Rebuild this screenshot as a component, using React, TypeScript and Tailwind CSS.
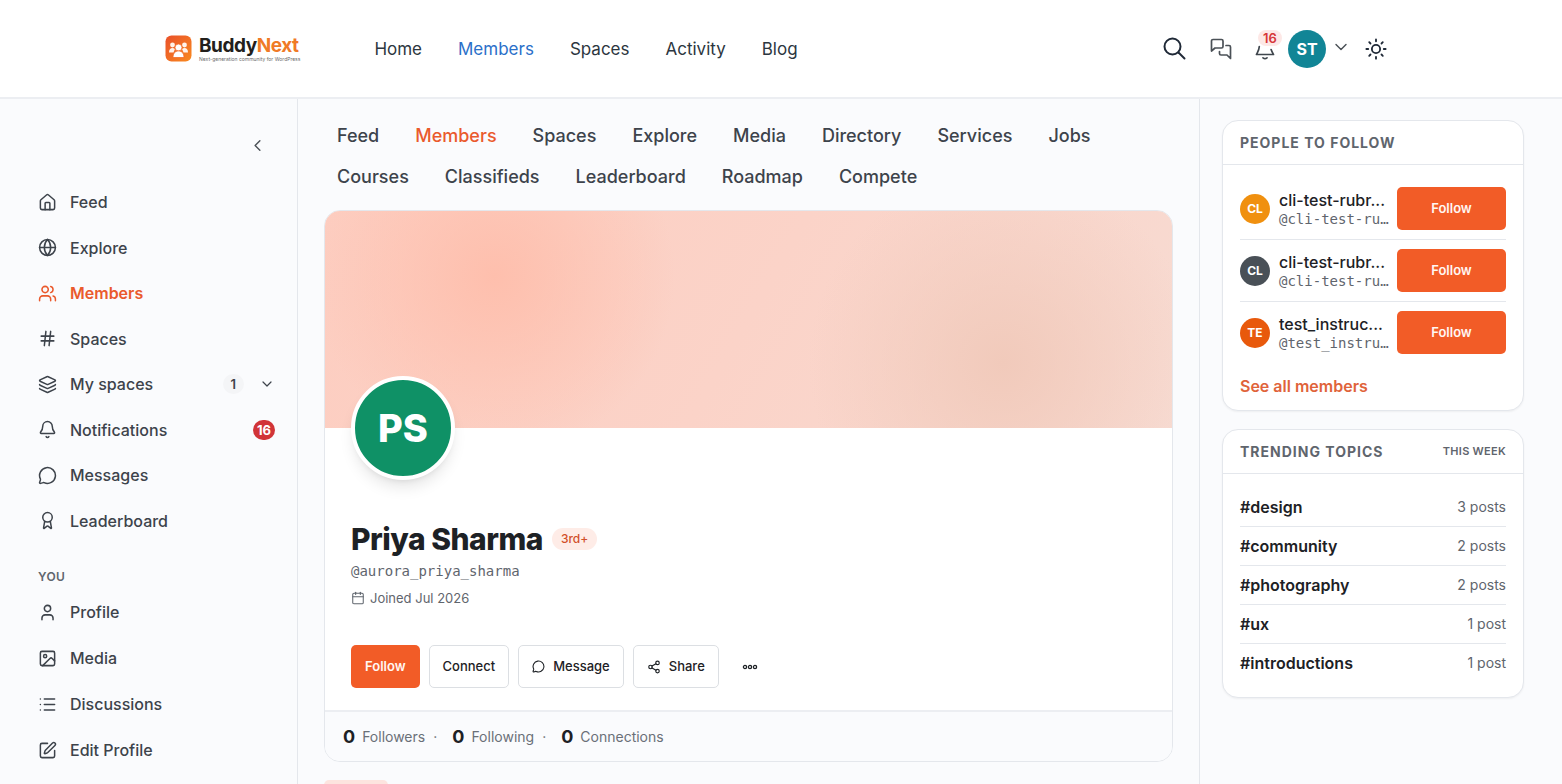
import React, { useState } from 'react';
import {
    Award,
    Bell,
    Calendar,
    ChevronDown,
    ChevronLeft,
    Globe,
    Hash,
    House,
    Image,
    Layers,
    List,
    LucideIcon,
    MessageCircle,
    Share2,
    SquarePen,
    User,
    Users,
} from 'lucide-react';

interface NavItem {
    label: string;
    icon: LucideIcon;
    count?: number;
    unread?: number;
}

const siteLinks = ['Home', 'Members', 'Spaces', 'Activity', 'Blog'];

const tabs = [
    'Feed', 'Members', 'Spaces', 'Explore', 'Media', 'Directory', 'Services', 'Jobs',
    'Courses', 'Classifieds', 'Leaderboard', 'Roadmap', 'Compete',
];

const mainNav: NavItem[] = [
    { label: 'Feed', icon: House },
    { label: 'Explore', icon: Globe },
    { label: 'Members', icon: Users },
    { label: 'Spaces', icon: Hash },
    { label: 'My spaces', icon: Layers, count: 1 },
    { label: 'Notifications', icon: Bell, unread: 16 },
    { label: 'Messages', icon: MessageCircle },
    { label: 'Leaderboard', icon: Award },
];

const youNav: NavItem[] = [
    { label: 'Profile', icon: User },
    { label: 'Media', icon: Image },
    { label: 'Discussions', icon: List },
    { label: 'Edit Profile', icon: SquarePen },
];

const people = [
    { id: 1, initials: 'CL', name: 'cli-test-rubr...', handle: '@cli-test-ru…', color: 'bg-[#f0900f]' },
    { id: 2, initials: 'CL', name: 'cli-test-rubr...', handle: '@cli-test-ru…', color: 'bg-[#495057]' },
    { id: 3, initials: 'TE', name: 'test_instruc...', handle: '@test_instru…', color: 'bg-[#e8590c]' },
];

const topics = [
    { tag: '#design', posts: '3 posts' },
    { tag: '#community', posts: '2 posts' },
    { tag: '#photography', posts: '2 posts' },
    { tag: '#ux', posts: '1 post' },
    { tag: '#introductions', posts: '1 post' },
];

const stats = [
    { label: 'Followers', value: 0 },
    { label: 'Following', value: 0 },
    { label: 'Connections', value: 0 },
];

const Logo = () => (
    <a href="#" className="flex items-center gap-[7px]">
        <svg width="27" height="27" viewBox="0 0 27 27" aria-hidden="true">
            <defs>
                <linearGradient id="logoFill" x1="0" y1="0" x2="1" y2="1">
                    <stop offset="0" stopColor="#e9502a" />
                    <stop offset="1" stopColor="#f98a1f" />
                </linearGradient>
            </defs>
            <rect x="0.5" y="0.5" width="26" height="26" rx="6" fill="url(#logoFill)" />
            <g fill="#fff3ea">
                <circle cx="7.500" cy="10" r="2.400" />
                <circle cx="19.500" cy="10" r="2.400" />
                <path d="M4 17.500c0-2.800 1.300-4.500 3.500-4.500 1 0 1.800.4 2.400 1l-1.400 3.500z" />
                <path d="M23 17.500c0-2.800-1.300-4.500-3.500-4.500-1 0-1.800.4-2.400 1l1.400 3.500z" />
            </g>
            <g fill="#fff" stroke="#f26c27" strokeWidth="0.8">
                <circle cx="13.500" cy="12.500" r="3.500" />
                <path d="M8 22.500c0-4 2-6.500 5.500-6.500s5.500 2.500 5.500 6.500z" />
            </g>
        </svg>
        <span className="flex flex-col">
            <span className="text-[19px] leading-5 font-bold tracking-tight text-[#231f1c]">
                Buddy<span className="text-[#f07a26]">Next</span>
            </span>
            <span className="text-[5px] leading-[6px] whitespace-nowrap text-[#6b6b6b]">Next-generation community for WordPress</span>
        </span>
    </a>
);

const SiteHeader = () => (
    <header className="border-b-2 border-[#eceef2] bg-white">
        <div className="mx-auto flex h-[97px] max-w-[1232px] items-center">
            <Logo />
            <nav className="ml-[74px] flex gap-9 pt-0.5 text-[17px]">
                {siteLinks.map(link => (
                    <a key={link} href="#" className={link === 'Members' ? 'text-[#2b70c9]' : 'text-[#2c3640]'}>{link}</a>
                ))}
            </nav>
            <div className="ml-auto flex items-center text-[#1f2937]">
                <button aria-label="Search" className="p-2">
                    <svg width="24" height="24" viewBox="0 0 24 24" fill="none" stroke="currentColor" strokeWidth="2" strokeLinecap="round">
                        <circle cx="10.500" cy="9.500" r="8" />
                        <path d="M16.500 15.500l6 6" />
                    </svg>
                </button>
                <button aria-label="Messages" className="ml-2 p-2">
                    <svg width="22" height="22" viewBox="0 0 22 22" fill="none" stroke="#4b5157" strokeWidth="1.700" strokeLinejoin="round" strokeLinecap="round">
                        <path d="M3 1.500h8.500a1.500 1.500 0 0 1 1.500 1.500v5.500a1.500 1.500 0 0 1-1.500 1.500H5L1.500 13V3A1.500 1.500 0 0 1 3 1.500z" />
                        <path d="M16 7.500h3a1.500 1.500 0 0 1 1.500 1.500v11.500L17 17h-6a1.500 1.500 0 0 1-1.500-1.500V13.500" />
                    </svg>
                </button>
                <button aria-label="Notifications, 16 unread" className="relative ml-[7px] p-2">
                    <svg width="20" height="22" viewBox="0 0 20 22" fill="none" stroke="#3f464d" strokeWidth="1.700" strokeLinecap="round" strokeLinejoin="round">
                        <path d="M4.300 8.500c-.2 3.500-1.300 5-2.800 8h17c-1.100-2-1.900-3.400-2.400-5" />
                        <path d="M8 19.800c1.200 1 2.800 1 4 0" />
                    </svg>
                    <span className="absolute top-0 left-[11px] rounded-full bg-[#fde8e6] px-[5px] text-[13px] leading-4 font-semibold text-[#d63638]">16</span>
                </button>
                <button className="ml-[5px] flex items-center gap-[5px]" aria-label="Account">
                    <span className="flex size-[38px] items-center justify-center rounded-full bg-[#118596] text-base font-bold text-white">ST</span>
                    <ChevronDown size={20} strokeWidth={1.7} className="-mt-1 text-[#4b5157]" />
                </button>
                <button aria-label="Toggle theme" className="ml-1 p-2.5">
                    <svg width="22" height="22" viewBox="0 0 24 24" fill="none" stroke="currentColor" strokeWidth="2" strokeLinecap="round">
                        <circle cx="12" cy="12" r="4.500" />
                        <path d="M12 1.500v2M12 20.500v2M1.500 12h2M20.500 12h2M4.600 4.600l1.400 1.400M18 18l1.400 1.400M4.600 19.400l1.400-1.400M18 6l1.400-1.400" />
                    </svg>
                </button>
            </div>
        </div>
    </header>
);

const SideLink = ({ item, active }: { item: NavItem; active?: boolean }) => {
    const Icon = item.icon;
    return (
        <a
            href="#"
            className={`flex h-11 items-center gap-[13px] text-base ${active ? 'font-semibold text-[#ea5a2d]' : 'font-medium text-[#3d434b]'}`}
        >
            <Icon size={19} strokeWidth={1.9} />
            {item.label}
            {item.count && (
                <>
                    <span className="ml-auto rounded-full bg-[#f4f5f7] px-2 text-[13px] leading-5 font-semibold">{item.count}</span>
                    <ChevronDown size={16} strokeWidth={1.8} className="ml-0.5" />
                </>
            )}
            {item.unread && (
                <span className="ml-auto rounded-full bg-[#d13438] px-1 text-[13px] leading-5 font-bold text-white">{item.unread}</span>
            )}
        </a>
    );
};

const Sidebar = () => (
    <aside className="w-[298px] shrink-0 border-r border-[#e4e7ec] pr-[22px] pl-[38px]">
        <div className="flex justify-end pt-9 pr-[7px]">
            <button aria-label="Collapse sidebar" className="p-px text-[#4b5157]"><ChevronLeft size={19} strokeWidth={1.8} /></button>
        </div>
        <nav className="mt-6 flex min-h-[363px] flex-col justify-between">
            {mainNav.map(item => <SideLink key={item.label} item={item} active={item.label === 'Members'} />)}
        </nav>
        <h2 className="mt-6 text-xs leading-5 font-semibold tracking-wide text-[#5f656d]">YOU</h2>
        <nav className="mt-[3px] flex flex-col gap-0.5">
            {youNav.map(item => <SideLink key={item.label} item={item} />)}
        </nav>
    </aside>
);

const ProfileCard = () => {
    const [following, setFollowing] = useState(false);
    const outline = 'flex h-[43px] items-center gap-2 rounded-[5px] border border-[#dcdfe3] bg-white px-[13px] text-[13px] font-medium text-[#1d2125]';

    return (
        <section className="mt-[13px] overflow-hidden rounded-2xl border border-[#e4e7ec] bg-white">
            <div className="h-[217px] bg-[radial-gradient(circle_at_20%_30%,#febfad_0%,transparent_26%),radial-gradient(circle_at_80%_70%,#f1cabb_0%,transparent_28%),linear-gradient(120deg,#fdcdc0_0%,#fbd3c8_50%,#f7dbd2_100%)]" />
            <div className="px-[26px] pb-[22px]">
                <div className="relative -mt-[52px] flex size-[104px] items-center justify-center rounded-full border-4 border-white bg-[#0f9166] text-[38px] font-extrabold text-white shadow-lg">
                    PS
                </div>
                <div className="mt-[38px] flex items-center gap-[9px]">
                    <h1 className="text-[30px] leading-[42px] font-extrabold tracking-[-0.5px] text-[#1d2125]">Priya Sharma</h1>
                    <span className="rounded-full bg-[#feece7] px-[9px] text-xs leading-[22px] font-medium text-[#d2502a]">3rd+</span>
                </div>
                <p className="font-['DejaVu_Sans_Mono',monospace] text-sm leading-[22px] text-[#5f656d]">@aurora_priya_sharma</p>
                <p className="mt-1 flex items-center gap-[5px] text-[13px] leading-6 text-[#5f656d]">
                    <Calendar size={14} strokeWidth={1.8} />
                    Joined Jul 2026
                </p>
                <div className="mt-[35px] flex items-center gap-[9px]">
                    <button
                        onClick={() => setFollowing(!following)}
                        className="h-[43px] rounded-[5px] bg-[#f25c27] px-[14px] text-[13px] font-semibold text-[#fff7f3]"
                    >
                        {following ? 'Following' : 'Follow'}
                    </button>
                    <button className={outline}>Connect</button>
                    <button className={outline}><MessageCircle size={13} strokeWidth={2} />Message</button>
                    <button className={outline}><Share2 size={14} strokeWidth={2} />Share</button>
                    <button aria-label="More" className="h-[43px] px-[14px] text-[#1d2125]">
                        <svg width="16" height="6" viewBox="0 0 16 6" fill="none" stroke="currentColor" strokeWidth="1.300">
                            <circle cx="3" cy="3" r="1.600" />
                            <circle cx="8" cy="3" r="1.600" />
                            <circle cx="13" cy="3" r="1.600" />
                        </svg>
                    </button>
                </div>
            </div>
            <div className="flex items-center border-t-2 border-[#eceef2] bg-[#fafbfd] px-[18px] text-sm leading-[49px] text-[#6a7078]">
                {stats.map((stat, i) => (
                    <React.Fragment key={stat.label}>
                        {i > 0 && <span className="mr-[15px] ml-2">·</span>}
                        <span className="mr-[7px] text-lg leading-[49px] font-bold text-[#1d2125]">{stat.value}</span>
                        <span>{stat.label}</span>
                    </React.Fragment>
                ))}
            </div>
        </section>
    );
};

const Widget = ({ title, note, children }: { title: string; note?: string; children: React.ReactNode }) => (
    <section className="rounded-2xl border border-[#e4e7ec] bg-white shadow-xs">
        <header className="flex h-11 items-center justify-between border-b border-[#e4e7ec] px-[17px]">
            <h2 className="text-sm font-bold tracking-[1px] text-[#5f656d]">{title}</h2>
            {note && <span className="text-[11px] font-semibold tracking-wide text-[#5f656d]">{note}</span>}
        </header>
        {children}
    </section>
);

const RightRail = () => (
    <aside className="flex w-[363px] shrink-0 flex-col gap-[18px] border-l border-[#e4e7ec] pt-[21px] pr-[38px] pl-[22px]">
        <Widget title="PEOPLE TO FOLLOW">
            <div className="px-[17px] pt-[13px] pb-3">
                <ul className="divide-y divide-[#e4e7ec]">
                    {people.map(person => (
                        <li key={person.id} className="flex items-center gap-[9px] py-[9px]">
                            <span className={`flex size-[30px] shrink-0 items-center justify-center rounded-full text-xs font-bold text-white ${person.color}`}>
                                {person.initials}
                            </span>
                            <span className="min-w-0 flex-1 whitespace-nowrap">
                                <span className="block text-base leading-5 font-medium text-[#1d2125]">{person.name}</span>
                                <span className="block font-['DejaVu_Sans_Mono',monospace] text-sm leading-[18px] text-[#5f656d]">{person.handle}</span>
                            </span>
                            <button className="h-[43px] w-[109px] rounded-[5px] bg-[#f25c27] text-[13px] font-semibold text-[#fff7f3]">Follow</button>
                        </li>
                    ))}
                </ul>
                <a href="#" className="mt-[11px] block text-base leading-6 font-semibold text-[#e0633a]">See all members</a>
            </div>
        </Widget>
        <Widget title="TRENDING TOPICS" note="THIS WEEK">
            <ul className="divide-y divide-[#e4e7ec] px-[17px] pt-[14px] pb-[15px]">
                {topics.map(topic => (
                    <li key={topic.tag} className="flex items-center justify-between py-[7px] leading-6">
                        <a href="#" className="text-base font-semibold text-[#1d2125]">{topic.tag}</a>
                        <span className="text-sm text-[#5f656d]">{topic.posts}</span>
                    </li>
                ))}
            </ul>
        </Widget>
    </aside>
);

const App: React.FC = () => (
    <div className="flex h-screen flex-col overflow-hidden bg-[#fafbfd] font-['Inter',sans-serif]">
        <SiteHeader />
        <div className="flex min-h-0 flex-1">
            <Sidebar />
            <main className="min-w-0 flex-1 px-[26px] pt-4">
                <nav className="flex flex-wrap gap-x-9 px-[13px] text-lg leading-[41px] font-medium">
                    {tabs.map(tab => (
                        <a key={tab} href="#" className={tab === 'Members' ? 'text-[#ea5a2d]' : 'text-[#3d434b]'}>{tab}</a>
                    ))}
                </nav>
                <ProfileCard />
                <div className="mt-[18px] h-10 w-16 rounded-[5px] bg-[#fde4df]" />
            </main>
            <RightRail />
        </div>
    </div>
);

export default App;
